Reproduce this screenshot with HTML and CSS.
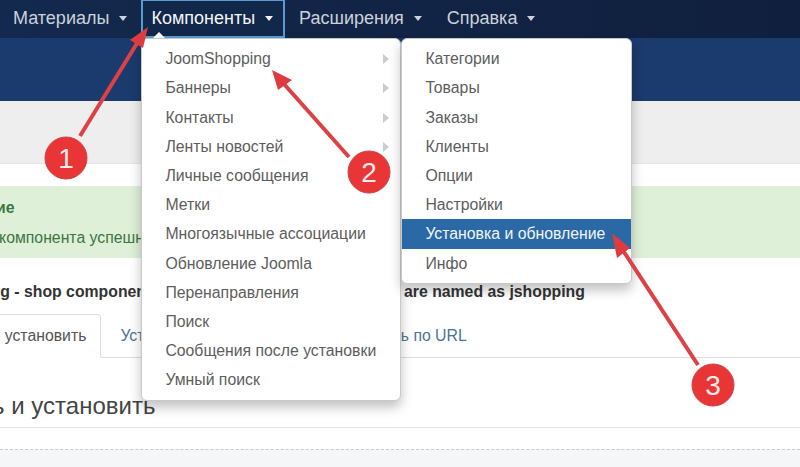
FILE: index.html
```html
<!DOCTYPE html>
<html lang="ru">
<head>
  <meta charset="UTF-8">
  <meta name="viewport" content="width=device-width, initial-scale=1.0">
  <title>Компоненты</title>
  <link rel="stylesheet" href="styles.css">
</head>
<body>

  <!-- Top menu -->
  <ul class="navbar">
    <li class="nav-item"><a href="#">Материалы <span class="caret"></span></a></li>
    <li class="nav-item active">
      <a href="#">Компоненты <span class="caret"></span></a>
      <ul class="dropdown">
        <li class="has-sub">
          <a href="#">JoomShopping</a>
          <ul class="dropdown submenu">
            <li><a href="#">Категории</a></li>
            <li><a href="#">Товары</a></li>
            <li><a href="#">Заказы</a></li>
            <li><a href="#">Клиенты</a></li>
            <li><a href="#">Опции</a></li>
            <li><a href="#">Настройки</a></li>
            <li class="current"><a href="#">Установка и обновление</a></li>
            <li><a href="#">Инфо</a></li>
          </ul>
        </li>
        <li class="has-sub"><a href="#">Баннеры</a></li>
        <li class="has-sub"><a href="#">Контакты</a></li>
        <li class="has-sub"><a href="#">Ленты новостей</a></li>
        <li><a href="#">Личные сообщения</a></li>
        <li><a href="#">Метки</a></li>
        <li><a href="#">Многоязычные ассоциации</a></li>
        <li><a href="#">Обновление Joomla</a></li>
        <li><a href="#">Перенаправления</a></li>
        <li><a href="#">Поиск</a></li>
        <li><a href="#">Сообщения после установки</a></li>
        <li><a href="#">Умный поиск</a></li>
      </ul>
    </li>
    <li class="nav-item"><a href="#">Расширения <span class="caret"></span></a></li>
    <li class="nav-item"><a href="#">Справка <span class="caret"></span></a></li>
  </ul>

  <div class="header"></div>
  <div class="toolbar"></div>

  <div class="content">
    <div class="alert">
      <h4 class="alert-title">Сообщение</h4>
      <p class="alert-text">Установка компонента успешно завершена</p>
    </div>

    <p class="notice"><span>JoomShopping - shop component.</span> <span class="notice-end">are named as jshopping</span></p>

    <!-- Install tabs -->
    <ul class="tabs">
      <li class="tab tab-active">Загрузить и установить</li>
      <li class="tab">Установить из каталога</li>
      <li class="tab">Установить по URL</li>
    </ul>

    <h2 class="section-title">Загрузить и установить</h2>
  </div>

  <div class="dropzone"></div>

  <!-- Red arrows and numbers drawn over the screenshot -->
  <svg class="marks" width="800" height="467" viewBox="0 0 800 467">
    <line class="arrow-line" x1="80" y1="136" x2="139" y2="40"/>
    <polygon class="arrow-head" points="148,27 130,40 143,48"/>
    <line class="arrow-line" x1="349" y1="157" x2="284" y2="84"/>
    <polygon class="arrow-head" points="272,70 292,80 278,90"/>
    <line class="arrow-line" x1="698" y1="365" x2="624" y2="252"/>
    <polygon class="arrow-head" points="612,233 630,248 617,258"/>

    <circle class="mark-dot" cx="66" cy="158" r="21"/>
    <circle class="mark-dot" cx="369" cy="172" r="21"/>
    <circle class="mark-dot" cx="713" cy="385" r="21"/>
    <text class="mark-num" x="66" y="168">1</text>
    <text class="mark-num" x="369" y="182">2</text>
    <text class="mark-num" x="713" y="395">3</text>
  </svg>

</body>
</html>
```

FILE: styles.css
```css
* {
  box-sizing: border-box;
}

html,
body {
  height: 467px;
}

body {
  font-family: "Liberation Sans", Arial, sans-serif;
  font-size: 15.8px;
  margin: 0;
  padding: 0;
  overflow: hidden;
  position: relative;
  background-color: #f5f6f8;
  color: #333;
}

ul {
  list-style: none;
  margin: 0;
  padding: 0;
}

a {
  color: inherit;
  text-decoration: none;
}

.navbar {
  display: flex;
  height: 38px;
  padding-left: 2px;
  background: linear-gradient(90deg, #13294d, #101f3d);
  font-size: 18px;
  color: #ccd2da;
}

.nav-item {
  position: relative;
  margin-right: 3px;
}

.nav-item > a {
  display: block;
  height: 38px;
  padding: 0 11px;
  line-height: 37px;
  white-space: nowrap;
}

.caret {
  display: inline-block;
  margin-left: 5px;
  vertical-align: 3px;
  border-top: 5px solid #ccd2da;
  border-left: 4.5px solid transparent;
  border-right: 4.5px solid transparent;
}

.nav-item.active > a {
  color: #f4f6f8;
  background-color: #12284a;
  border: 2px solid #5b9bd1;
  border-top-width: 1px;
  padding: 0 10px 0 8px;
  line-height: 35px;
}

.nav-item.active .caret {
  border-top-color: #f4f6f8;
}

/* little notch above the open menu */
.nav-item.active::after {
  content: "";
  position: absolute;
  top: 32px;
  left: 12px;
  border-bottom: 6px solid #fff;
  border-left: 6px solid transparent;
  border-right: 6px solid transparent;
}

.dropdown {
  position: absolute;
  z-index: 10;
  top: 38px;
  left: 0;
  width: 260px;
  padding: 5.2px 0 5.8px;
  background-color: #fff;
  border: 1px solid #c9c9c9;
  border-radius: 6px;
  box-shadow: 0 6px 12px rgba(0, 0, 0, 0.25);
  color: #5d5d5d;
  font-size: 15.8px;
}

.dropdown li > a {
  display: block;
  height: 29.2px;
  padding-left: 23px;
  line-height: 29px;
  white-space: nowrap;
}

.has-sub {
  position: relative;
}

.has-sub::after {
  content: "";
  position: absolute;
  top: 10px;
  right: 11px;
  border-left: 6px solid #ccc;
  border-top: 5px solid transparent;
  border-bottom: 5px solid transparent;
}

.submenu {
  top: -6.2px;
  left: 259px;
  width: 231px;
}

.current > a {
  background-color: #2a69a5;
  color: #f2f5f8;
}

.header {
  height: 63px;
  background-color: #1b3a6d;
}

.toolbar {
  height: 63px;
  background-color: #eeeeee;
  border-bottom: 1px solid #e6e6e6;
}

.content {
  height: 285px;
  padding-top: 22px;
  background-color: #fff;
}

.alert {
  height: 72px;
  padding: 13px 0 0 0;
  background-color: #dff0d8;
  color: #3c763d;
}

.alert-title {
  margin: 0 0 11px -76px;
  font-size: 15.8px;
  line-height: 18px;
}

.alert-text {
  margin: 0 0 0 -80px;
  line-height: 19px;
}

.notice {
  margin: 25px 0 0 -105px;
  font-weight: bold;
  line-height: 18px;
  white-space: nowrap;
}

.notice-end {
  margin-left: 244px;
}

.tabs {
  display: flex;
  height: 44px;
  margin-top: 13px;
  border-bottom: 1px solid #ddd;
  color: #4d7396;
}

.tab {
  height: 44px;
  padding: 0 14px 0 15px;
  line-height: 42px;
  white-space: nowrap;
  border: 1px solid transparent;
  margin-right: 3px;
}

.tab-active {
  margin-left: -101px;
  color: #555;
  background-color: #fff;
  border-color: #ddd;
  border-bottom-color: #fff;
  border-radius: 4px 4px 0 0;
}

.section-title {
  margin: 35px 0 0 -105px;
  padding-bottom: 8px;
  font-size: 24px;
  font-weight: normal;
  line-height: 26px;
  border-bottom: 1px solid #e5e5e5;
  color: #444;
}

.dropzone {
  height: 18px;
  border-top: 1px dashed #ccc;
}

.marks {
  position: absolute;
  top: 0;
  left: 0;
  z-index: 20;
}

.arrow-line {
  stroke: #dd4145;
  stroke-width: 4;
}

.arrow-head {
  fill: #dd3b40;
}

.mark-dot {
  fill: #e93535;
  stroke: #c9474b;
  stroke-width: 1;
}

.mark-num {
  fill: #f6ecec;
  font-size: 28px;
  text-anchor: middle;
}
```
